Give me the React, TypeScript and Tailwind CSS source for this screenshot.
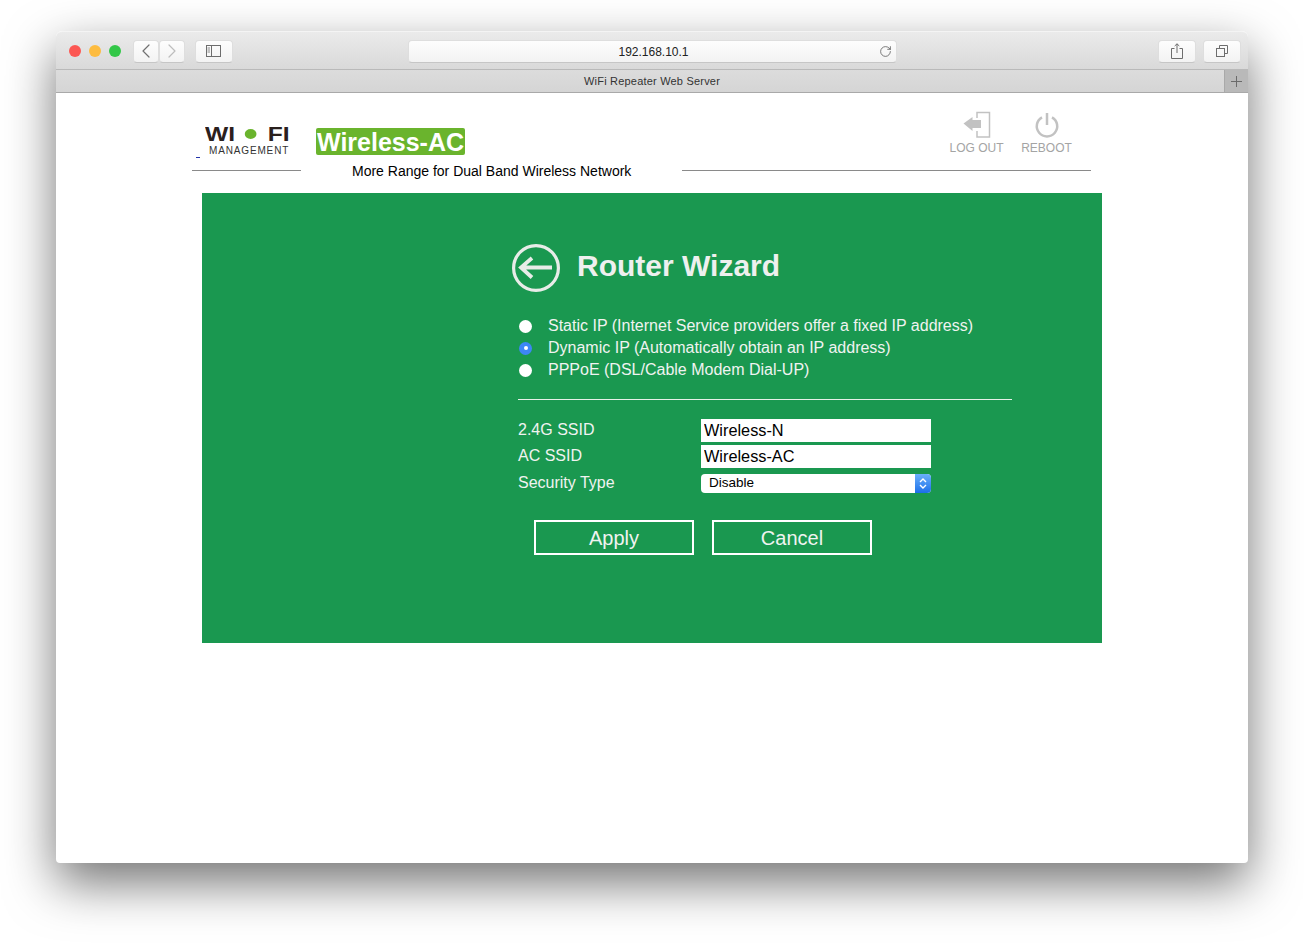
import { ChevronLeft, ChevronRight, RotateCw } from "lucide-react";

const font = "font-['Liberation_Sans',Arial,sans-serif]";

function ToolButton({ className, children }: { className: string; children: React.ReactNode }) {
  return (
    <div className={"h-[23px] flex items-center justify-center bg-gradient-to-b from-[#fdfdfd] to-[#f3f3f3] border border-[#dedede] border-b-[#c6c6c6] rounded-[4px] " + className}>
      {children}
    </div>
  );
}

function Toolbar() {
  return (
    <div className="h-[39px] pt-[1px] flex items-center bg-gradient-to-b from-[#ebebeb] to-[#d9d9d9] border-t border-[#f4f4f4] rounded-t-[6px] border-b border-b-[#b9b9b9] shrink-0">
      <div className="flex items-center gap-2 ml-[13px] mr-[12px]">
        <span className="w-3 h-3 rounded-full bg-[#fc5753]" />
        <span className="w-3 h-3 rounded-full bg-[#fdbc40]" />
        <span className="w-3 h-3 rounded-full bg-[#33c748]" />
      </div>
      <ToolButton className="w-[26px]">
        <ChevronLeft size={24} strokeWidth={1.2} className="text-[#707070] shrink-0" />
      </ToolButton>
      <ToolButton className="w-[26px] mr-[10px]">
        <ChevronRight size={24} strokeWidth={1.2} className="text-[#bdbdbd] shrink-0" />
      </ToolButton>
      <ToolButton className="w-[38px] mr-[175px]">
        <svg width="15" height="12" viewBox="0 0 15 12" fill="none" stroke="#6d6d6d" className="-ml-px">
          <rect x="0.5" y="0.5" width="14" height="11" />
          <path d="M5.5 0.5V11.5" />
          <path d="M1.5 3H4M1.5 5H4M1.5 7H4" strokeWidth="0.8" />
        </svg>
      </ToolButton>
      <div className="w-[489px] h-[23px] relative flex items-center justify-center bg-gradient-to-b from-[#fdfdfd] to-[#f3f3f3] border border-[#dedede] border-b-[#c6c6c6] rounded-[4px] text-[12px] text-[#222]">
        <span className="ml-[2px] mt-[1px]">192.168.10.1</span>
        <RotateCw size={13} strokeWidth={1.4} className="absolute right-[4px] top-[4px] text-[#555]" />
      </div>
      <ToolButton className="w-[38px] ml-[261px]">
        <svg width="12" height="16" viewBox="0 0 12 16" fill="none" stroke="#6d6d6d">
          <path d="M3.5 5.5H0.5V15.5H11.5V5.5H8.5" />
          <path d="M6 10V0.8M3.7 3L6 0.8L8.3 3" />
        </svg>
      </ToolButton>
      <ToolButton className="w-[38px] ml-[7px]">
        <svg width="12" height="12" viewBox="0 0 12 12" fill="none" stroke="#6d6d6d">
          <rect x="0.5" y="3.5" width="8" height="8" />
          <path d="M3.5 3.5V0.5H11.5V8.5H8.5" />
        </svg>
      </ToolButton>
    </div>
  );
}

function TabBar() {
  return (
    <div className="h-[23px] flex bg-gradient-to-b from-[#dcdcdc] to-[#d5d5d5] border-b border-[#a9a9a9] shrink-0">
      <div className="flex-1 pl-6 flex items-center justify-center text-[11px] text-[#333] tracking-[0.2px]">WiFi Repeater Web Server</div>
      <div className="w-6 flex items-center justify-center bg-[#b9b9b9] border-l border-[#a9a9a9]">
        <svg width="11" height="11" viewBox="0 0 11 11" stroke="#6a6a6a">
          <path d="M5.5 0V11M0 5.5H11" />
        </svg>
      </div>
    </div>
  );
}

function Header() {
  return (
    <div className="h-[100px] flex ml-[136px] w-[900px] shrink-0">
      <div className="w-[109px] h-[78px] border-b border-[#8a8a8a] relative">
        <div className="mt-[31px] ml-[13px] flex items-center text-[#2a201d] text-[21px] leading-[20px] font-bold scale-x-[1.17] origin-left">
          <span>WI</span>
          <span className="w-[10px] h-[10px] rounded-full bg-[#6ab42d] ml-[8px] mr-[10px]" />
          <span>FI</span>
        </div>
        <div className="ml-[17px] mt-[1px] text-[10px] leading-[12px] tracking-[0.85px] text-[#333]">MANAGEMENT</div>
        <span className="absolute left-[4px] top-[64px] w-[4px] h-px bg-[#2233aa]" />
      </div>
      <div className="w-[381px] pl-[15px]">
        <div className="mt-[35px] w-[149px] h-[27px] pl-px bg-[#6ab42d] rounded-[2px] text-white text-[25px] leading-[29px] font-bold whitespace-nowrap">Wireless-AC</div>
        <div className="ml-[36px] mt-[8px] text-[14px] leading-[16px] text-black whitespace-nowrap">More Range for Dual Band Wireless Network</div>
      </div>
      <div className="w-[409px] h-[78px] border-b border-[#8a8a8a] flex pl-[267px] gap-[17px] text-[#a4a4a4] text-[12px] leading-[16px] whitespace-nowrap">
        <div className="flex flex-col items-center pt-[17px] w-[55px]">
          <svg width="28" height="28" viewBox="0 0 28 28" fill="none" className="mb-[2px] shrink-0">
            <path d="M14 8V2.5H26.5V27H14V21" stroke="#c2c2c2" strokeWidth="1.5" />
            <path d="M0.5 13.5L9.5 7V10H18V18H9.5V21Z" fill="#c2c2c2" />
          </svg>
          LOG OUT
        </div>
        <div className="flex flex-col items-center pt-[17px] w-[51px]">
          <svg width="26" height="28" viewBox="0 0 26 28" fill="none" className="mb-[2px] shrink-0" stroke="#c2c2c2" strokeWidth="2.5">
            <path d="M8 7.3A10.2 10.2 0 1 0 18 7.3" />
            <path d="M13 3V15" />
          </svg>
          REBOOT
        </div>
      </div>
    </div>
  );
}

function RadioRow({ label, checked }: { label: string; checked?: boolean }) {
  return (
    <div className="h-[22px] flex items-center text-[16px] text-[#f0f3f0]">
      <span className={"w-[13px] h-[13px] rounded-full flex items-center justify-center mr-[16px] ml-[1px] " + (checked ? "bg-[#3d86f5]" : "bg-white")}>
        {checked && <span className="w-[4px] h-[4px] rounded-full bg-white" />}
      </span>
      {label}
    </div>
  );
}

function FormRow({ label, className, children }: { label: string; className: string; children: React.ReactNode }) {
  return (
    <div className={"flex items-center text-[16px] text-[#f0f3f0] " + className}>
      <div className="w-[183px]">{label}</div>
      {children}
    </div>
  );
}

function Panel() {
  return (
    <div className="ml-[146px] w-[900px] h-[450px] bg-[#1a9850] pt-[50px] pl-[310px]">
      <div className="flex items-center h-[50px] text-[#eef0ee]">
        <svg width="50" height="50" viewBox="0 0 50 50" fill="none" stroke="#e8ece8" className="shrink-0">
          <circle cx="24" cy="25" r="22.4" strokeWidth="3.2" />
          <path d="M9 24.5H40M20 15L9 24.5L20 34.5" strokeWidth="3.8" />
        </svg>
        <h1 className="ml-[15px] text-[30px] font-bold leading-[44px] mb-[4px]">Router Wizard</h1>
      </div>
      <div className="mt-[22px] ml-[6px] w-[494px]">
        <RadioRow label="Static IP (Internet Service providers offer a fixed IP address)" />
        <RadioRow label="Dynamic IP (Automatically obtain an IP address)" checked />
        <RadioRow label="PPPoE (DSL/Cable Modem Dial-UP)" />
        <div className="mt-[18px] h-px bg-[#e6f0e8]" />
        <FormRow label="2.4G SSID" className="mt-[18px] h-[24px]">
          <input readOnly value="Wireless-N" className="w-[230px] h-[23px] pt-[1px] bg-white text-black text-[16.3px] px-[3px] outline-none" />
        </FormRow>
        <FormRow label="AC SSID" className="mt-[2px] h-[24px]">
          <input readOnly value="Wireless-AC" className="w-[230px] h-[23px] pt-[1px] bg-white text-black text-[16.3px] px-[3px] outline-none" />
        </FormRow>
        <FormRow label="Security Type" className="mt-[5px] h-[20px]">
          <div className="w-[230px] h-[19px] pt-[1px] bg-white rounded-[4px] flex items-center justify-between text-black text-[13.5px] pl-[8px] overflow-hidden">
            Disable
            <span className="w-[16px] h-[19px] -mt-[1px] bg-gradient-to-b from-[#6ab0fb] to-[#1a6fe8] flex items-center justify-center">
              <svg width="8" height="13" viewBox="0 0 8 13" fill="none" stroke="white" strokeWidth="1.4">
                <path d="M1 5L4 2L7 5M1 8L4 11L7 8" />
              </svg>
            </span>
          </div>
        </FormRow>
        <div className="flex mt-[27px] ml-[16px] gap-[18px]">
          <button className="w-[160px] h-[35px] border-2 border-white text-[20px] text-[#f0f3f0]">Apply</button>
          <button className="w-[160px] h-[35px] border-2 border-white text-[20px] text-[#f0f3f0]">Cancel</button>
        </div>
      </div>
    </div>
  );
}

export default function App() {
  return (
    <div className={"w-[1304px] h-[943px] bg-white overflow-hidden pt-[31px] pl-[56px] " + font}>
      <div className="w-[1192px] h-[832px] flex flex-col bg-white rounded-t-[6px] rounded-b-[4px] shadow-[0_20px_50px_rgba(0,0,0,0.55)]">
        <Toolbar />
        <TabBar />
        <Header />
        <Panel />
      </div>
    </div>
  );
}
